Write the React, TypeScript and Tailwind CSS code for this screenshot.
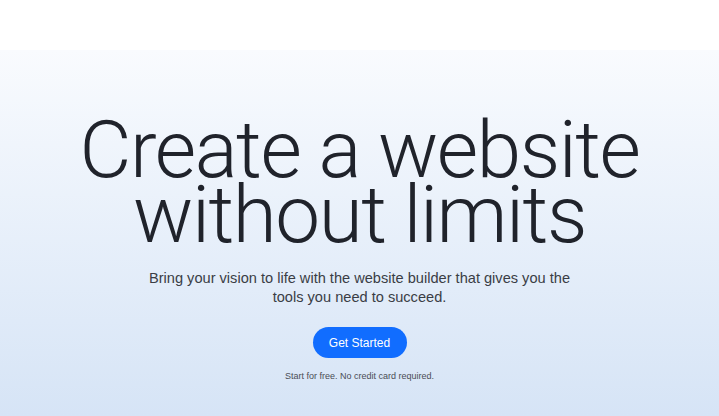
export default function App() {
  return (
    <div className="flex h-[416px] w-full flex-col overflow-hidden bg-white font-['Inter',sans-serif]">
      {/* Header strip */}
      <header className="h-[50px] shrink-0 bg-white" />

      {/* Hero */}
      <main className="flex flex-1 flex-col items-center bg-gradient-to-b from-[#f9fbfe] to-[#d6e4f6] pt-[68px]">
        <h1 className="text-center font-['Roboto',sans-serif] text-[80px] font-light leading-[65px] tracking-[-0.018em] text-[#20232b]">
          Create a website
          <br />
          without limits
        </h1>
        <p className="mt-[21px] w-[440px] text-center font-['Liberation_Sans',sans-serif] text-[14.6px] leading-[19px] text-[#3a3d45]">
          Bring your vision to life with the website builder that gives you the tools you need to succeed.
        </p>
        <button className="mt-[20px] h-[31px] w-[94px] rounded-full bg-[#116dff] font-['Liberation_Sans',sans-serif] text-[12px] text-white">
          Get Started
        </button>
        <p className="mt-[12px] font-['Liberation_Sans',sans-serif] text-[9px] text-[#4a4d55]">
          Start for free. No credit card required.
        </p>
      </main>
    </div>
  )
}
